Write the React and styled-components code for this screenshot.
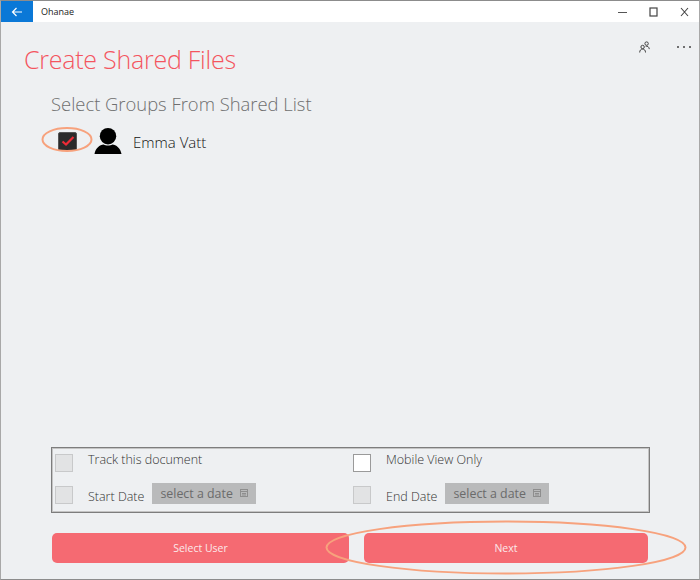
import styled, { createGlobalStyle } from "styled-components";

const GlobalStyle = createGlobalStyle`
  html, body {
    margin: 0;
    padding: 0;
    background: #eef0f2;
  }
  * {
    box-sizing: border-box;
  }
`;

function CalendarIcon() {
  return (
    <svg width="8" height="8" viewBox="0 0 8 8" fill="none" stroke="#8e8e8e" strokeWidth="1">
      <rect x="0.5" y="0.5" width="7" height="7" />
      <path d="M0.5 2.500H7.500M2 4.500H6M2 6H6" />
    </svg>
  );
}

function DateField() {
  return (
    <DateBox>
      select a date
      <CalendarIcon />
    </DateBox>
  );
}

export default function App() {
  return (
    <>
      <GlobalStyle />
      <Window>
        <TitleBar>
          <BackButton>
            <svg width="12" height="10" viewBox="0 0 12 10" fill="none" stroke="#fff" strokeWidth="1.2">
              <path d="M11 5H1.500M5.500 1L1.500 5L5.500 9" />
            </svg>
          </BackButton>
          <AppName>Ohanae</AppName>
          <WindowControls>
            <svg width="9" height="10" viewBox="0 0 9 10" stroke="#555" fill="none">
              <path d="M0 5.500H9" />
            </svg>
            <svg width="9" height="10" viewBox="0 0 9 10" stroke="#444" fill="none" strokeWidth="1.2">
              <rect x="1" y="1" width="7" height="8" />
            </svg>
            <svg width="9" height="10" viewBox="0 0 9 10" stroke="#444" fill="none" strokeWidth="1.1">
              <path d="M1 1L8 9M8 1L1 9" />
            </svg>
          </WindowControls>
        </TitleBar>

        <Content>
          <TopActions>
            <svg width="11" height="12" viewBox="0 0 11 12" fill="none" stroke="#444" strokeWidth="1">
              <circle cx="3.600" cy="6" r="1.700" />
              <path d="M0.700 11.500c0-2.200 1.100-3.400 2.900-3.400s2.900 1.200 2.900 3.400" />
              <circle cx="7.600" cy="2.600" r="1.700" />
              <path d="M6.600 5.200c2-.4 3.500.8 3.700 2.900" />
            </svg>
            <MoreDots>
              <i />
              <i />
              <i />
            </MoreDots>
          </TopActions>
          <PageTitle>Create Shared Files</PageTitle>
          <SectionTitle>Select Groups From Shared List</SectionTitle>
          <UserRow>
            <CheckedBox>
              <svg width="14" height="12" viewBox="0 0 14 12" fill="none" stroke="#ee2b36" strokeWidth="2.2">
                <path d="M1.500 6.500L5 9.500L12.500 2" />
              </svg>
              <Ring width="52" height="27" viewBox="0 0 52 27" $left={-18} $top={-7}>
                <ellipse cx="26" cy="13.500" rx="24.500" ry="11.500" />
              </Ring>
            </CheckedBox>
            <svg width="28" height="28" viewBox="0 0 29 28" fill="#000">
              <circle cx="14.500" cy="9" r="8.500" />
              <path d="M0.500 27.500C1.500 21 6 18 10 17.500C12 19 17 19 19 17.500C23 18 27.500 21 28.500 27.500Z" />
            </svg>
            <UserName>Emma Vatt</UserName>
          </UserRow>
        </Content>

        <OptionsPanel>
          <OptionCell>
            <Box />
            <OptionLabel $raised>Track this document</OptionLabel>
          </OptionCell>
          <OptionCell>
            <Box $white />
            <OptionLabel $raised>Mobile View Only</OptionLabel>
          </OptionCell>
          <OptionCell>
            <Box />
            <OptionLabel>Start Date</OptionLabel>
            <DateField />
          </OptionCell>
          <OptionCell>
            <Box />
            <OptionLabel>End Date</OptionLabel>
            <DateField />
          </OptionCell>
        </OptionsPanel>

        <ButtonRow>
          <ActionButton $width={297}>Select User</ActionButton>
          <ActionButton $width={284}>
            Next
            <Ring width="362" height="55" viewBox="0 0 362 55" $left={-39} $top={-13}>
              <ellipse cx="181" cy="27.500" rx="179.500" ry="26" />
            </Ring>
          </ActionButton>
        </ButtonRow>
      </Window>
    </>
  );
}

const Window = styled.div`
  position: relative;
  display: flex;
  flex-direction: column;
  width: 700px;
  height: 580px;
  overflow: hidden;
  background: #eef0f2;
  border-top: 1px solid #8c8c8c;
  border-left: 1px solid #a8a8a8;
  border-right: 1px solid #a8a8a8;
  border-bottom: 1px solid #8c8c8c;
  font-family: "Open Sans", "Noto Sans", sans-serif;
`;

const TitleBar = styled.div`
  display: flex;
  align-items: center;
  height: 21px;
  background: #fff;
  flex-shrink: 0;
`;

const BackButton = styled.div`
  display: flex;
  align-items: center;
  justify-content: center;
  width: 32px;
  height: 100%;
  background: #0a78d7;
`;

const AppName = styled.div`
  margin-left: 8px;
  font-size: 9px;
  color: #222;
`;

const WindowControls = styled.div`
  display: flex;
  align-items: center;
  gap: 22px;
  margin-left: auto;
  margin-right: 10px;
`;

const Content = styled.div`
  position: relative;
  flex: 1;
  padding: 0 0 0 23px;
`;

const TopActions = styled.div`
  position: absolute;
  top: 19px;
  right: 8px;
  display: flex;
  align-items: center;
  gap: 27px;
`;

const MoreDots = styled.div`
  display: flex;
  gap: 4px;

  i {
    width: 2px;
    height: 2px;
    background: #444;
    border-radius: 50%;
  }
`;

const PageTitle = styled.h1`
  margin: 17px 0 0;
  font-size: 25px;
  line-height: 40px;
  font-weight: 300;
  letter-spacing: -0.25px;
  color: #f4555f;
`;

const SectionTitle = styled.h2`
  margin: 12px 0 0 27px;
  font-size: 18.400px;
  line-height: 26px;
  font-weight: 300;
  color: #6f6f6f;
`;

const UserRow = styled.div`
  display: flex;
  align-items: center;
  margin: 10px 0 0 34px;
  height: 28px;
`;

const CheckedBox = styled.div`
  position: relative;
  display: flex;
  align-items: center;
  justify-content: center;
  width: 19px;
  height: 19px;
  margin-right: 17px;
  background: #2b2b2b;
  border: 1px solid #555;
  border-radius: 2px;
`;

const Ring = styled.svg`
  position: absolute;
  left: ${(props) => props.$left}px;
  top: ${(props) => props.$top}px;
  pointer-events: none;
  fill: none;
  stroke: #f7a27d;
  stroke-width: 2;
`;

const UserName = styled.span`
  margin: 1px 0 0 11px;
  font-size: 15px;
  font-weight: 300;
  color: #111;
`;

const OptionsPanel = styled.div`
  display: grid;
  grid-template-columns: 298px 1fr;
  grid-template-rows: 29px 35px;
  width: 599px;
  height: 66px;
  margin-left: 50px;
  padding-left: 2px;
  border: 1px solid #7d7d7d;
  box-shadow: inset 0 0 0 1px #c4c4c4;
  flex-shrink: 0;
`;

const OptionCell = styled.div`
  display: flex;
  align-items: center;
  padding-left: 1px;
`;

const Box = styled.div`
  width: 18px;
  height: 18px;
  flex-shrink: 0;
  background: ${(props) => (props.$white ? "#fff" : "#e2e3e4")};
  border: 1px solid ${(props) => (props.$white ? "#9a9a9a" : "#c8c9ca")};
`;

const OptionLabel = styled.span`
  margin-left: 15px;
  font-size: 12.500px;
  font-weight: 300;
  color: #333;
  position: relative;
  top: ${(props) => (props.$raised ? "-3px" : "2px")};
`;

const DateBox = styled.div`
  display: flex;
  align-items: center;
  gap: 7px;
  height: 21px;
  margin: 0 0 3px 8px;
  padding: 0 8px;
  background: #b9babb;
  color: #6b6b6b;
  font-size: 12.400px;
`;

const ButtonRow = styled.div`
  display: flex;
  justify-content: space-between;
  width: 596px;
  margin: 20px 0 16px 51px;
  height: 30px;
  flex-shrink: 0;
`;

const ActionButton = styled.div`
  position: relative;
  display: flex;
  align-items: center;
  justify-content: center;
  width: ${(props) => props.$width}px;
  height: 30px;
  background: #f56a72;
  border-radius: 5px;
  color: #fbe9ea;
  font-size: 10.500px;
`;
